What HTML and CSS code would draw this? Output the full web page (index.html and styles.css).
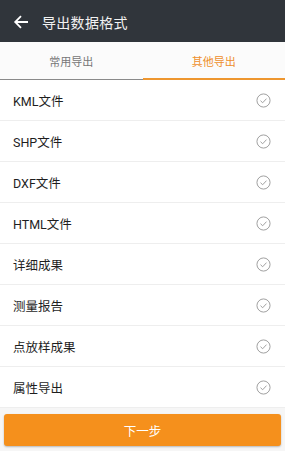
FILE: index.html
```html
<!DOCTYPE html>
<html lang="zh-CN">
<head>
<meta charset="utf-8">
<link rel="stylesheet" href="styles.css">
</head>
<body>
<div class="page">
  <header class="topbar">
    <svg class="back" width="16" height="16" viewBox="0 0 16 16"><path d="M15 8H2.5M8 2.2L2.2 8L8 13.8" fill="none" stroke="#fff" stroke-width="1.8"/></svg>
    <span class="title">导出数据格式</span>
  </header>
  <nav class="tabs">
    <div class="tab">常用导出</div>
    <div class="tab active">其他导出</div>
  </nav>
  <ul class="list">
    <li class="row"><span>KML文件</span><svg class="chk" viewBox="0 0 16 16"><circle cx="8" cy="8" r="7" fill="none" stroke="#9a9a9a" stroke-width="1"/><path d="M4.8 8.2L7.1 10.4L11.2 6" fill="none" stroke="#9a9a9a" stroke-width="1"/></svg></li>
    <li class="row"><span>SHP文件</span><svg class="chk" viewBox="0 0 16 16"><circle cx="8" cy="8" r="7" fill="none" stroke="#9a9a9a" stroke-width="1"/><path d="M4.8 8.2L7.1 10.4L11.2 6" fill="none" stroke="#9a9a9a" stroke-width="1"/></svg></li>
    <li class="row"><span>DXF文件</span><svg class="chk" viewBox="0 0 16 16"><circle cx="8" cy="8" r="7" fill="none" stroke="#9a9a9a" stroke-width="1"/><path d="M4.8 8.2L7.1 10.4L11.2 6" fill="none" stroke="#9a9a9a" stroke-width="1"/></svg></li>
    <li class="row"><span>HTML文件</span><svg class="chk" viewBox="0 0 16 16"><circle cx="8" cy="8" r="7" fill="none" stroke="#9a9a9a" stroke-width="1"/><path d="M4.8 8.2L7.1 10.4L11.2 6" fill="none" stroke="#9a9a9a" stroke-width="1"/></svg></li>
    <li class="row"><span>详细成果</span><svg class="chk" viewBox="0 0 16 16"><circle cx="8" cy="8" r="7" fill="none" stroke="#9a9a9a" stroke-width="1"/><path d="M4.8 8.2L7.1 10.4L11.2 6" fill="none" stroke="#9a9a9a" stroke-width="1"/></svg></li>
    <li class="row"><span>测量报告</span><svg class="chk" viewBox="0 0 16 16"><circle cx="8" cy="8" r="7" fill="none" stroke="#9a9a9a" stroke-width="1"/><path d="M4.8 8.2L7.1 10.4L11.2 6" fill="none" stroke="#9a9a9a" stroke-width="1"/></svg></li>
    <li class="row"><span>点放样成果</span><svg class="chk" viewBox="0 0 16 16"><circle cx="8" cy="8" r="7" fill="none" stroke="#9a9a9a" stroke-width="1"/><path d="M4.8 8.2L7.1 10.4L11.2 6" fill="none" stroke="#9a9a9a" stroke-width="1"/></svg></li>
    <li class="row"><span>属性导出</span><svg class="chk" viewBox="0 0 16 16"><circle cx="8" cy="8" r="7" fill="none" stroke="#9a9a9a" stroke-width="1"/><path d="M4.8 8.2L7.1 10.4L11.2 6" fill="none" stroke="#9a9a9a" stroke-width="1"/></svg></li>
  </ul>
  <div class="footer">
    <button class="next">下一步</button>
  </div>
</div>
</body>
</html>
```
FILE: styles.css
```css
* { box-sizing: border-box; }
html, body { margin: 0; padding: 0; }
body {
  width: 285px;
  height: 451px;
  overflow: hidden;
  background: #f6f6f6;
  font-family: "Roboto", "Noto Sans CJK SC", sans-serif;
}
.page { display: flex; flex-direction: column; height: 451px; }
.topbar {
  height: 42px;
  background: #30353b;
  display: flex;
  align-items: center;
  padding: 2px 0 0 13px;
  gap: 13px;
  color: #f2f2f2;
}
.back { display: block; }
.title { font-size: 14px; letter-spacing: 0.3px; }
.tabs {
  display: flex;
  height: 38px;
  background: #fbfbfb;
}
.tab {
  flex: 1;
  display: flex;
  align-items: center;
  justify-content: center;
  font-size: 11px;
  color: #777;
  border-bottom: 1px solid #8a8a8a;
  padding-top: 1px;
}
.tab.active {
  color: #ee8f2c;
  border-bottom: 2px solid #ee962f;
}
.list { list-style: none; margin: 0; padding: 0; background: #fff; }
.row {
  height: 41px;
  display: flex;
  align-items: center;
  justify-content: space-between;
  padding: 0 14px 0 13px;
  border-bottom: 1px solid #eeeeee;
  font-size: 12.5px;
  color: #1e1e1e;
}
.chk { width: 15px; height: 15px; display: block; }
.footer { padding: 6px 4px 0 4px; }
.next {
  width: 100%;
  height: 32px;
  border: none;
  border-radius: 3px;
  background: #f5901c;
  color: #fff;
  font-family: "Roboto", "Noto Sans CJK SC", sans-serif;
  font-size: 12.5px;
  box-shadow: 0 1px 2px rgba(0,0,0,0.25);
}
```
